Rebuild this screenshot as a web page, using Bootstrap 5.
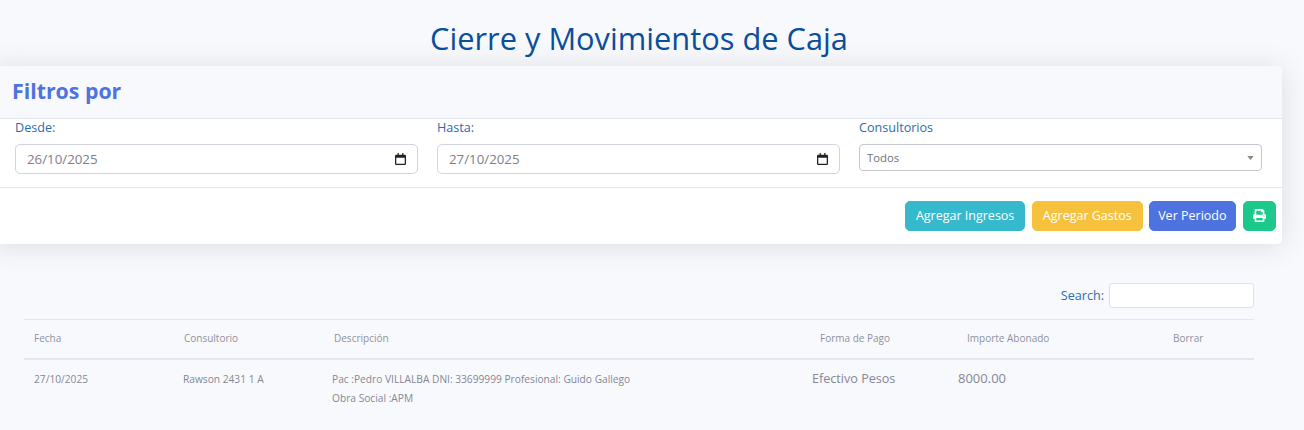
<!DOCTYPE html>
<html lang="es">
<head>
  <meta charset="UTF-8">
  <meta name="viewport" content="width=device-width, initial-scale=1.0">
  <title>Cierre y Movimientos de Caja</title>
  <link href="https://cdn.jsdelivr.net/npm/bootstrap@5.3.0/dist/css/bootstrap.min.css" rel="stylesheet">
  <style>
    html, body { height: 430px; overflow: hidden; }
    body { background: #f8f9fc; color: #858796; font-family: "Open Sans", "Noto Sans", sans-serif; font-size: 13px; }
    .page-title { color: #0a4f9c; font-size: 30.800px; font-weight: 400; line-height: 40px; padding: 18px 26px 0 0; margin: 0 0 8px; text-align: center; }
    .filtros { width: 1290px; margin-left: -8px; border: 0; border-radius: 5px; box-shadow: 0 2px 28px rgba(58,59,69,.15); }
    .filtros .card-header { background: #f8f9fc; height: 53px; padding: 11px 20px; border-bottom: 1px solid #e3e6f0; }
    .filtros h5 { color: #4e73df; font-size: 21.300px; font-weight: 700; line-height: 28px; margin: 0; }
    .filtros .card-body { height: 68px; padding: 0 20px 0 23px; }
    .filtros .card-footer { background: #fff; height: 57px; padding: 13px 6px; border-top: 1px solid #e3e6f0; gap: 6.500px; }
    .campos { display: grid; grid-template-columns: repeat(3, 1fr); column-gap: 19px; }
    .campo-label { color: #2a6cb0; font-size: 12.600px; line-height: 18px; margin: 0; display: block; height: 25px; }
    .fecha { height: 30px; border: 1px solid #d1d3e2; border-radius: 5px; padding: 0 11px; font-size: 13.300px; color: #7c7e8d; }
    .cal-ico { position: absolute; right: 12.500px; top: 9px; width: 11px; height: 12px; }
    .combo { height: 27px; border: 1px solid #c5c6d0; border-radius: 4px; padding: 1px 7px 0; font-size: 11.300px; color: #6e707e; background-image: url("data:image/svg+xml,%3Csvg xmlns='http://www.w3.org/2000/svg' viewBox='0 0 8 5'%3E%3Cpath d='M0 0h8L4 5z' fill='%23888'/%3E%3C/svg%3E"); background-size: 7px 4px; background-position: right 7px center; }
    .boton { height: 30px; padding: 0 10px; font-size: 12.500px; line-height: 28px; color: #fff; border-radius: 5px; white-space: nowrap; }
    .boton-info { background: #36b9cc; border-color: #36b9cc; }
    .boton-warn { background: #f6c23e; border-color: #f6c23e; }
    .boton-prim { background: #4e73df; border-color: #4e73df; padding: 0 8px; }
    .boton-ok { background: #1cc88a; border-color: #1cc88a; width: 33px; padding: 0; margin-left: 1px; }
    .boton-ok svg { width: 13px; height: 13px; fill: #fff; margin-top: -3px; }
    .listado { margin: 0 50px 0 24px; }
    .buscar { height: 75px; padding-top: 39px; gap: 5px; color: #2a6cb0; font-size: 12.600px; }
    .buscar input { width: 145px; height: 25px; border: 1px solid #dfe1ea; border-radius: 3px; background: #fff; }
    .tabla { table-layout: fixed; width: 1230px; margin: 0; color: #858796; --bs-table-bg: transparent; }
    .tabla th { font-size: 10px; font-weight: 400; color: #8f919e; height: 39px; padding: 0 10px; vertical-align: middle; border-top: 1px solid #e3e6f0; border-bottom: 2px solid #e3e6f0; }
    .tabla td { font-size: 10.200px; padding: 10px 9px; border: 0; color: #858796; line-height: 19.500px; vertical-align: top; }
    .tabla td.fch { padding-left: 10px; }
    .tabla td.desc { padding-left: 8px; }
    .tabla td.monto { font-size: 12.600px; padding-left: 2px; padding-top: 9px; }
    .tabla td.monto.imp { font-size: 13px; padding-left: 1px; }
  </style>
</head>
<body>
  <h1 class="page-title">Cierre y Movimientos de Caja</h1>

  <div class="card filtros">
    <div class="card-header">
      <h5>Filtros por</h5>
    </div>
    <div class="card-body">
      <div class="campos">
        <div>
          <label class="campo-label" for="desde">Desde:</label>
          <div class="position-relative">
            <input type="text" class="form-control fecha" id="desde" value="26/10/2025">
            <svg class="cal-ico" viewBox="0 0 13 14"><path d="M3 0v2H1.500A1.500 1.500 0 0 0 0 3.500v9A1.500 1.500 0 0 0 1.500 14h10a1.500 1.500 0 0 0 1.500-1.500v-9A1.500 1.500 0 0 0 11.500 2H10V0H8.500v2h-4V0zM1.500 5.500h10v7h-10z" fill="#222"/></svg>
          </div>
        </div>
        <div>
          <label class="campo-label" for="hasta">Hasta:</label>
          <div class="position-relative">
            <input type="text" class="form-control fecha" id="hasta" value="27/10/2025">
            <svg class="cal-ico" viewBox="0 0 13 14"><path d="M3 0v2H1.500A1.500 1.500 0 0 0 0 3.500v9A1.500 1.500 0 0 0 1.500 14h10a1.500 1.500 0 0 0 1.500-1.500v-9A1.500 1.500 0 0 0 11.500 2H10V0H8.500v2h-4V0zM1.500 5.500h10v7h-10z" fill="#222"/></svg>
          </div>
        </div>
        <div>
          <label class="campo-label" for="consultorios">Consultorios</label>
          <select class="form-select combo" id="consultorios">
            <option>Todos</option>
          </select>
        </div>
      </div>
    </div>
    <div class="card-footer d-flex justify-content-end">
      <button type="button" class="btn boton boton-info">Agregar Ingresos</button>
      <button type="button" class="btn boton boton-warn">Agregar Gastos</button>
      <button type="button" class="btn boton boton-prim">Ver Periodo</button>
      <button type="button" class="btn boton boton-ok" aria-label="Imprimir">
        <svg viewBox="0 0 512 512"><path d="M448 192V77.250c0-8.490-3.370-16.620-9.370-22.630L393.370 9.370c-6-6-14.140-9.370-22.630-9.370H96C78.330 0 64 14.330 64 32v160c-35.350 0-64 28.650-64 64v112c0 8.840 7.160 16 16 16h48v96c0 17.670 14.330 32 32 32h320c17.670 0 32-14.330 32-32v-96h48c8.840 0 16-7.160 16-16V256c0-35.350-28.650-64-64-64zm-64 256H128v-96h256v96zm0-224H128V64h192v48c0 8.840 7.160 16 16 16h48v96zm48 72c-13.250 0-24-10.750-24-24 0-13.260 10.750-24 24-24s24 10.740 24 24c0 13.250-10.750 24-24 24z"/></svg>
      </button>
    </div>
  </div>

  <div class="listado">
    <div class="buscar d-flex justify-content-end align-items-start">
      <label for="buscar" class="lh-lg">Search:</label>
      <input type="search" id="buscar">
    </div>
    <table class="table tabla">
      <colgroup>
        <col style="width:150px"><col style="width:150px"><col style="width:486px">
        <col style="width:147px"><col style="width:206px"><col style="width:91px">
      </colgroup>
      <thead>
        <tr>
          <th>Fecha</th><th>Consultorio</th><th>Descripción</th>
          <th>Forma de Pago</th><th>Importe Abonado</th><th>Borrar</th>
        </tr>
      </thead>
      <tbody>
        <tr>
          <td class="fch">27/10/2025</td>
          <td>Rawson 2431 1 A</td>
          <td class="desc">Pac :Pedro VILLALBA DNI: 33699999 Profesional: Guido Gallego<br>Obra Social :APM</td>
          <td class="monto">Efectivo Pesos</td>
          <td class="monto imp">8000.00</td>
          <td></td>
        </tr>
      </tbody>
    </table>
  </div>
</body>
</html>
